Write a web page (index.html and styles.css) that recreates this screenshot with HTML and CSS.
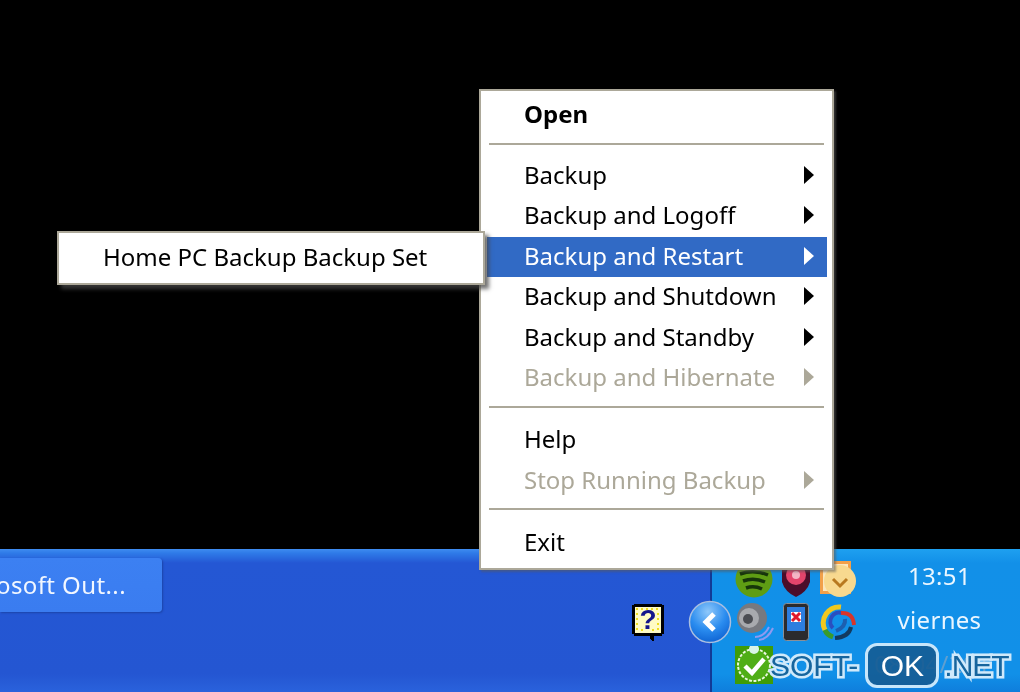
FILE: index.html
```html
<!DOCTYPE html>
<html lang="en">
<head>
<meta charset="utf-8">
<title>Backup tray menu</title>
<link rel="stylesheet" href="styles.css">
</head>
<body>
<div class="screen">
  <div class="desktop"></div>
  <div class="taskbar">
    <div class="bar-main">
      <div class="task-button"><span>Microsoft Out...</span></div>
      <div class="notify">
        <svg class="help-icon" width="32" height="37" viewBox="0 0 32 37">
          <path d="M2 0h28v1h2v29h-2v2H22v5h-2v-1h-1v-1h-1v-3H2v-2H0V1h2z" fill="#000"/>
          <path d="M3 3h26v26H3z" fill="#fffbc4"/>
          <path d="M4 4h2v2H4zM9 4h2v2H9zM14 4h2v2h-2zM19 4h2v2h-2zM24 4h2v2h-2zM4 9h2v2H4zM25 9h2v2h-2zM4 14h2v2H4zM25 14h2v2h-2zM4 19h2v2H4zM25 19h2v2h-2zM4 24h2v2H4zM9 25h2v2H9zM20 25h2v2h-2zM25 24h2v2h-2z" fill="#efdc1e"/>
          <text x="16" y="25" class="help-mark">?</text>
        </svg>
        <svg class="back-icon" width="44" height="44" viewBox="0 0 44 44">
          <defs>
            <radialGradient id="backFill" cx="45%" cy="25%" r="80%">
              <stop offset="0" stop-color="#8fc8fa"/>
              <stop offset=".55" stop-color="#2a8cef"/>
              <stop offset="1" stop-color="#0c5fd0"/>
            </radialGradient>
          </defs>
          <circle cx="22" cy="22" r="20.5" fill="url(#backFill)" stroke="#a9bfe0" stroke-width="1.5"/>
          <path d="M26 14l-8 8 8 8" fill="none" stroke="#fff" stroke-width="5"/>
        </svg>
      </div>
    </div>
    <div class="tray">
      <div class="tray-icons">
        <div class="tray-cell">
          <svg width="38" height="38" viewBox="0 0 38 38">
            <circle cx="19" cy="19" r="18.5" fill="#5f9d14"/>
            <path d="M5 14q14-5 28 1M8 21q11-4 22 1M11 28q8-3 16 1" fill="none" stroke="#17360a" stroke-width="3.5"/>
          </svg>
        </div>
        <div class="tray-cell">
          <svg width="30" height="38" viewBox="0 0 30 38">
            <path d="M1 3h28v19q-3 10-14 15Q4 32 1 22z" fill="#4b0d2a"/>
            <circle cx="15" cy="15" r="10" fill="#e4446b"/>
            <circle cx="15" cy="15" r="4" fill="#f5b5c5"/>
          </svg>
        </div>
        <div class="tray-cell">
          <svg width="38" height="40" viewBox="0 0 38 40">
            <path d="M1 2h31v33H1z" fill="#f2a04a"/>
            <path d="M4 5h25v27H4z" fill="#fbe6bd"/>
            <circle cx="21" cy="22" r="16" fill="#f8d98f"/>
            <path d="M14 20l7 7 7-7" fill="none" stroke="#b8791f" stroke-width="3"/>
          </svg>
        </div>
        <div class="tray-cell">
          <svg width="40" height="38" viewBox="0 0 40 38">
            <circle cx="18" cy="15" r="15" fill="#77797f"/>
            <circle cx="15" cy="15" r="10" fill="#a8aaae"/>
            <circle cx="14" cy="16" r="5" fill="#4b4d52"/>
            <path d="M21 34q9 0 14-10M25 37q9-1 14-12" fill="none" stroke="#8f9af0" stroke-width="2"/>
          </svg>
        </div>
        <div class="tray-cell">
          <svg width="26" height="38" viewBox="0 0 26 38">
            <rect x=".5" y=".5" width="25" height="37" rx="3" fill="#2b2b2e" stroke="#8a8f96"/>
            <rect x="4" y="4" width="18" height="24" fill="#2d7ee0"/>
            <path d="M8 9h10v10H8z" fill="#fff"/>
            <path d="M9 10l8 8M17 10l-8 8" stroke="#e0182b" stroke-width="3"/>
          </svg>
        </div>
        <div class="tray-cell">
          <svg width="38" height="38" viewBox="0 0 38 38">
            <path d="M6 27A16 16 0 0 1 22 4" fill="none" stroke="#f0c81e" stroke-width="5"/>
            <path d="M6 27q2 5 8 7" fill="none" stroke="#3a9b2a" stroke-width="5"/>
            <path d="M14 25a9 9 0 0 1 9-15" fill="none" stroke="#2a4fc0" stroke-width="4"/>
            <path d="M22 10q12-1 13 12" fill="none" stroke="#d8352a" stroke-width="4"/>
            <path d="M32 24q-2 10-16 11" fill="none" stroke="#133a5e" stroke-width="4"/>
            <path d="M26 16q1 8-9 12" fill="none" stroke="#1c5fb0" stroke-width="4"/>
          </svg>
        </div>
        <div class="tray-cell">
          <svg width="38" height="38" viewBox="0 0 38 38">
            <path d="M0 0h38v38H0z" fill="#3f9c08"/>
            <circle cx="19" cy="19" r="16" fill="#4fae16" stroke="#e8f7dc" stroke-width="2" stroke-dasharray="3 1.5"/>
            <circle cx="19" cy="3" r="5" fill="#d8f4e8"/>
            <path d="M10 20l7 7 12-14" fill="none" stroke="#fff" stroke-width="4.5"/>
          </svg>
        </div>
      </div>
      <div class="clock">
        <span>13:51</span>
        <span>viernes</span>
        <span class="date">08/04/2011</span>
      </div>
    </div>
  </div>

  <div class="menu main-menu">
    <div class="item strong">Open</div>
    <div class="sep"></div>
    <div class="item sub">Backup</div>
    <div class="item sub">Backup and Logoff</div>
    <div class="item sub active">Backup and Restart</div>
    <div class="item sub">Backup and Shutdown</div>
    <div class="item sub">Backup and Standby</div>
    <div class="item sub off">Backup and Hibernate</div>
    <div class="sep sep-b"></div>
    <div class="item">Help</div>
    <div class="item sub off">Stop Running Backup</div>
    <div class="sep sep-c"></div>
    <div class="item">Exit</div>
  </div>

  <div class="menu sub-menu">
    <div class="item">Home PC Backup Backup Set</div>
  </div>

  <div class="watermark">
    <span class="wm-text">SOFT-</span>
    <span class="wm-ok">OK</span>
    <span class="wm-text wm-net">.NET</span>
  </div>
</div>
</body>
</html>
```
FILE: styles.css
```css
* { box-sizing: border-box; }
html, body { margin: 0; padding: 0; background: #000; }
body { width: 1020px; height: 692px; overflow: hidden; }

.screen {
  position: relative;
  width: 1020px;
  height: 692px;
  display: flex;
  flex-direction: column;
  background: #000;
  overflow: hidden;
  font-family: "Noto Sans", "Open Sans", sans-serif;
  filter: blur(0.7px);
}

.desktop { height: 549px; }

.taskbar { flex: 1; display: flex; min-height: 0; }

.bar-main {
  width: 710px;
  display: flex;
  justify-content: space-between;
  padding-top: 9px;
  background: linear-gradient(#3f8cf0 0, #2f7be8 4px, #2457d4 14px, #2456d2 125px, #2a62dc 143px);
  position: relative;
  z-index: 1;
}

.task-button {
  width: 162px;
  height: 54px;
  display: flex;
  justify-content: flex-end;
  align-items: center;
  padding: 0 36px 2px 0;
  overflow: hidden;
  white-space: nowrap;
  color: #f2f7ff;
  font-size: 24px;
  letter-spacing: .4px;
  background: linear-gradient(#3c80f2, #3a7cf0);
  border-radius: 0 4px 4px 0;
  box-shadow: 1px 1px 2px #1c44a8;
}

.notify {
  display: flex;
  align-items: center;
  gap: 24px;
  height: 44px;
  margin-top: 42px;
  margin-right: -22px;
}

.help-mark {
  font-family: "Liberation Sans", sans-serif;
  font-size: 28px;
  font-weight: 700;
  fill: #14148c;
  text-anchor: middle;
}

.tray {
  flex: 1;
  display: flex;
  padding: 8px 0 0 21px;
  background: linear-gradient(#1ea0f0 0, #1290e8 14px, #1190e8 125px, #0f7edc 143px);
  border-left: 2px solid #123a96;
}

.tray-icons {
  width: 126px;
  display: grid;
  grid-template-columns: repeat(3, 42px);
  grid-auto-rows: 43px;
  align-content: start;
}

.tray-cell { display: flex; align-items: center; justify-content: center; }

.clock {
  flex: 1;
  display: flex;
  flex-direction: column;
  align-items: center;
  color: #eaf6ff;
  font-size: 24px;
  line-height: 44px;
  letter-spacing: .3px;
  margin-top: -3px;
}

.date { color: #5f9fd0; }

.menu {
  position: absolute;
  background: #fff;
  border: 2px solid #aca899;
  color: #000;
  font-size: 24px;
  z-index: 2;
}

.main-menu {
  left: 479px;
  top: 89px;
  width: 355px;
  height: 481px;
  padding: 3px 5px 0 6px;
  box-shadow: 2px 2px 2px rgba(90, 90, 90, .55);
}

.sub-menu {
  left: 57px;
  top: 231px;
  width: 428px;
  height: 54px;
  padding: 5px 0;
  box-shadow: 4px 4px 4px rgba(70, 70, 70, .75);
  z-index: 3;
}

.sub-menu .item { padding-left: 44px; }

.item {
  position: relative;
  height: 40.4px;
  line-height: 38px;
  padding-left: 37px;
  white-space: nowrap;
}

.strong { font-weight: 700; height: 41px; line-height: 40px; }
.active { background: #316ac5; color: #fff; }
.off { color: #aca899; }

.sub::after {
  content: "";
  position: absolute;
  right: 13px;
  top: 10px;
  border-left: 10px solid currentColor;
  border-top: 9px solid transparent;
  border-bottom: 9px solid transparent;
}

.sep { height: 2px; margin: 8px 3px 11px 2px; background: #aca899; }
.sep-b { margin-bottom: 12px; }
.sep-c { margin-top: 7px; margin-bottom: 13px; }

.watermark {
  position: absolute;
  left: 770px;
  top: 643px;
  display: flex;
  align-items: center;
  height: 45px;
  font-family: "Liberation Sans", sans-serif;
  font-size: 30px;
  z-index: 4;
}

.wm-text {
  color: #16659e;
  -webkit-text-stroke: 5px #cfe9fb;
  paint-order: stroke fill;
}

.wm-net { letter-spacing: -1px; margin-left: 5px; }

.wm-ok {
  width: 74px;
  height: 45px;
  margin-left: 7px;
  line-height: 39px;
  text-align: center;
  color: #fff;
  background: rgba(20, 90, 145, .88);
  border: 3px solid #c7e6fb;
  border-radius: 12px;
}
```
